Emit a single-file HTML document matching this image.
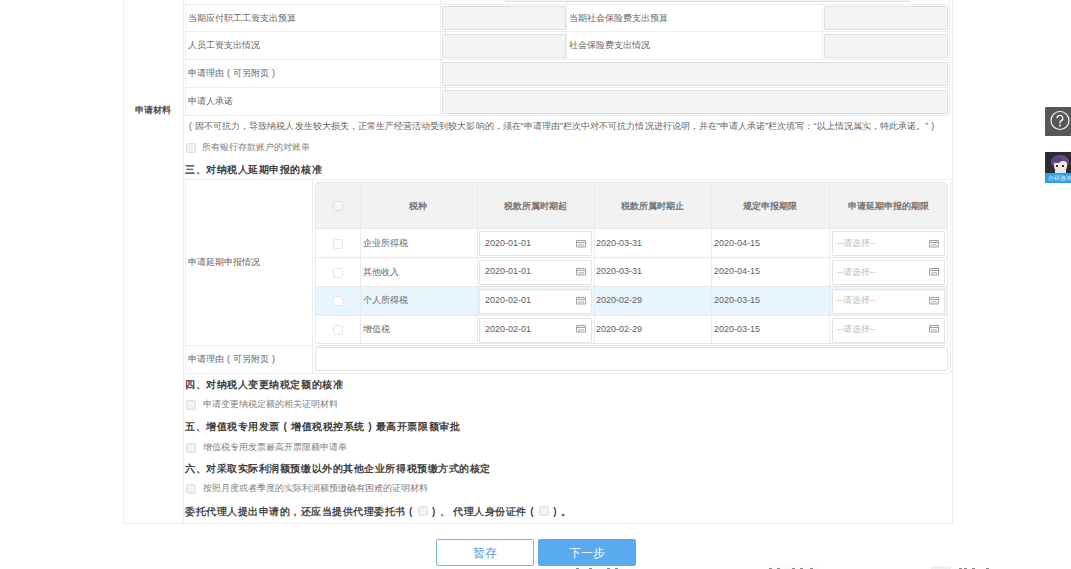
<!DOCTYPE html>
<html><head><meta charset="utf-8"><style>
html,body{margin:0;padding:0;background:#fff;width:1071px;height:569px;overflow:hidden;position:relative}
body{font-family:"Liberation Sans",sans-serif;font-size:9px;color:#666}
body div{position:absolute}
.t,.h,.d{white-space:nowrap;line-height:13px}
.h{font-size:10px;font-weight:bold;line-height:14px}
i{font-style:normal;display:inline-block;width:9px;text-align:center}
.h i{width:11px}
.cbi{display:inline-block;width:10px;height:10px;border:1px solid #e0e0e0;background:#f2f2f2;box-sizing:border-box;border-radius:2px;vertical-align:-1px;margin:0 1px}
</style></head><body>
<div style="left:123px;top:-10px;width:830px;height:534px;border:1px solid #eeeeee;box-sizing:border-box"></div>
<div style="left:183px;top:0px;width:1px;height:523px;background:#eeeeee"></div>
<div class="t" style="left:135px;top:104px;font-weight:bold;color:#4d4d4d">申请材料</div>
<div style="left:185px;top:0px;width:1px;height:116px;background:#eeeeee"></div>
<div style="left:949px;top:0px;width:1px;height:116px;background:#eeeeee"></div>
<div style="left:185px;top:4px;width:765px;height:1px;background:#eeeeee"></div>
<div style="left:185px;top:31px;width:765px;height:1px;background:#eeeeee"></div>
<div style="left:185px;top:59px;width:765px;height:1px;background:#eeeeee"></div>
<div style="left:185px;top:87px;width:765px;height:1px;background:#eeeeee"></div>
<div style="left:185px;top:115px;width:765px;height:1px;background:#eeeeee"></div>
<div style="left:440px;top:0px;width:1px;height:115px;background:#eeeeee"></div>
<div style="left:566px;top:0px;width:1px;height:59px;background:#eeeeee"></div>
<div style="left:822px;top:0px;width:1px;height:59px;background:#eeeeee"></div>
<div style="left:505px;top:-20px;width:405px;height:22px;border:1px solid #dfdfe0;background:#f3f4f6;box-sizing:border-box;border-radius:1px"></div>
<div style="left:442px;top:6px;width:124px;height:24px;border:1px solid #dfdfe0;background:#f3f4f6;box-sizing:border-box;border-radius:1px"></div>
<div style="left:824px;top:6px;width:124px;height:24px;border:1px solid #dfdfe0;background:#f3f4f6;box-sizing:border-box;border-radius:1px"></div>
<div style="left:442px;top:34px;width:124px;height:24px;border:1px solid #dfdfe0;background:#f3f4f6;box-sizing:border-box;border-radius:1px"></div>
<div style="left:824px;top:34px;width:124px;height:24px;border:1px solid #dfdfe0;background:#f3f4f6;box-sizing:border-box;border-radius:1px"></div>
<div style="left:442px;top:62px;width:506px;height:24px;border:1px solid #dfdfe0;background:#f3f4f6;box-sizing:border-box;border-radius:1px"></div>
<div style="left:442px;top:90px;width:506px;height:24px;border:1px solid #dfdfe0;background:#f3f4f6;box-sizing:border-box;border-radius:1px"></div>
<div class="t" style="left:188px;top:12px;">当期应付职工工资支出预算</div>
<div class="t" style="left:188px;top:39px;">人员工资支出情况</div>
<div class="t" style="left:188px;top:67px;">申请理由<i>(</i>可另附页<i>)</i></div>
<div class="t" style="left:188px;top:95px;">申请人承诺</div>
<div class="t" style="left:569px;top:12px;">当期社会保险费支出预算</div>
<div class="t" style="left:569px;top:39px;">社会保险费支出情况</div>
<div class="t" style="left:186px;top:120px;letter-spacing:0.05px"><i>(</i>因不可抗力，导致纳税人发生较大损失，正常生产经营活动受到较大影响的，须在“申请理由”栏次中对不可抗力情况进行说明，并在“申请人承诺”栏次填写：“以上情况属实，特此承诺。”<i>)</i></div>
<div style="left:186px;top:143px;width:10px;height:10px;border:1px solid #e0e0e0;background:#f2f2f2;box-sizing:border-box;border-radius:2px"></div>
<div class="t" style="left:202px;top:141px;color:#808080">所有银行存款账户的对账单</div>
<div class="h" style="left:185px;top:163px;letter-spacing:0.55px;color:#404040">三、对纳税人延期申报的核准</div>
<div style="left:185px;top:179px;width:766px;height:195px;border:1px solid #eeeeee;box-sizing:border-box"></div>
<div style="left:185px;top:345px;width:765px;height:1px;background:#eeeeee"></div>
<div style="left:312px;top:179px;width:1px;height:194px;background:#eeeeee"></div>
<div class="t" style="left:188px;top:256px;">申请延期申报情况</div>
<div class="t" style="left:188px;top:353px;">申请理由<i>(</i>可另附页<i>)</i></div>
<div style="left:315px;top:347px;width:633px;height:24px;border:1px solid #e4e4e4;background:#fff;box-sizing:border-box;border-radius:2px"></div>
<div style="left:315px;top:182px;width:633px;height:162px;border:1px solid #e9e9e9;box-sizing:border-box;border-radius:3px;overflow:hidden"></div>
<div style="left:316px;top:183px;width:631px;height:45px;background:#f2f2f2;border-radius:2px 2px 0 0"></div>
<div style="left:316px;top:286px;width:631px;height:29px;background:#e9f5fc"></div>
<div style="left:316px;top:228px;width:631px;height:1px;background:#e9e9e9"></div>
<div style="left:316px;top:257px;width:631px;height:1px;background:#e9e9e9"></div>
<div style="left:316px;top:286px;width:631px;height:1px;background:#e9e9e9"></div>
<div style="left:316px;top:315px;width:631px;height:1px;background:#e9e9e9"></div>
<div style="left:360px;top:183px;width:1px;height:160px;background:#ebebeb"></div>
<div style="left:477px;top:183px;width:1px;height:160px;background:#ebebeb"></div>
<div style="left:594px;top:183px;width:1px;height:160px;background:#ebebeb"></div>
<div style="left:711px;top:183px;width:1px;height:160px;background:#ebebeb"></div>
<div style="left:829px;top:183px;width:1px;height:160px;background:#ebebeb"></div>
<div class="t" style="left:318px;top:200px;width:200px;text-align:center;font-weight:bold;color:#737373">税种</div>
<div class="t" style="left:435px;top:200px;width:200px;text-align:center;font-weight:bold;color:#737373">税款所属时期起</div>
<div class="t" style="left:552px;top:200px;width:200px;text-align:center;font-weight:bold;color:#737373">税款所属时期止</div>
<div class="t" style="left:670px;top:200px;width:200px;text-align:center;font-weight:bold;color:#737373">规定申报期限</div>
<div class="t" style="left:788px;top:200px;width:200px;text-align:center;font-weight:bold;color:#737373">申请延期申报的期限</div>
<div style="left:333px;top:201px;width:10px;height:10px;border:1px solid #e0e0e0;background:#f7f7f7;box-sizing:border-box;border-radius:2px"></div>
<div style="left:333px;top:239px;width:10px;height:10px;border:1px solid #e6e6e6;background:#fff;box-sizing:border-box;border-radius:2px"></div>
<div class="t" style="left:363px;top:237px;">企业所得税</div>
<div style="left:479px;top:231px;width:113px;height:25px;border:1px solid #e4e4e4;background:#fff;box-sizing:border-box;border-radius:1px"></div>
<div class="d" style="left:485px;top:237px;color:#5e5e5e">2020-01-01</div>
<svg style="position:absolute;left:576px;top:239px" width="10" height="9" viewBox="0 0 10 9"><path d="M0.5 1.5h9v6.5h-9z M0.5 3.5h9" fill="none" stroke="#a4a4a4" stroke-width="1"/><path d="M2.5 0.8v1.5 M7.5 0.8v1.5" stroke="#a4a4a4" stroke-width="1"/><path d="M2.5 5.5h5v1.5h-5z" fill="none" stroke="#b8b8b8" stroke-width="0.8"/></svg>
<div class="d" style="left:596px;top:237px;color:#5e5e5e">2020-03-31</div>
<div class="d" style="left:714px;top:237px;color:#5e5e5e">2020-04-15</div>
<div style="left:832px;top:231px;width:113px;height:25px;border:1px solid #e4e4e4;background:#fff;box-sizing:border-box;border-radius:1px"></div>
<div class="t" style="left:837px;top:237px;color:#c0c0c0">--请选择--</div>
<svg style="position:absolute;left:929px;top:239px" width="10" height="9" viewBox="0 0 10 9"><path d="M0.5 1.5h9v6.5h-9z M0.5 3.5h9" fill="none" stroke="#a4a4a4" stroke-width="1"/><path d="M2.5 0.8v1.5 M7.5 0.8v1.5" stroke="#a4a4a4" stroke-width="1"/><path d="M2.5 5.5h5v1.5h-5z" fill="none" stroke="#b8b8b8" stroke-width="0.8"/></svg>
<div style="left:333px;top:268px;width:10px;height:10px;border:1px solid #e6e6e6;background:#fff;box-sizing:border-box;border-radius:2px"></div>
<div class="t" style="left:363px;top:266px;">其他收入</div>
<div style="left:479px;top:260px;width:113px;height:25px;border:1px solid #e4e4e4;background:#fff;box-sizing:border-box;border-radius:1px"></div>
<div class="d" style="left:485px;top:265px;color:#5e5e5e">2020-01-01</div>
<svg style="position:absolute;left:576px;top:267px" width="10" height="9" viewBox="0 0 10 9"><path d="M0.5 1.5h9v6.5h-9z M0.5 3.5h9" fill="none" stroke="#a4a4a4" stroke-width="1"/><path d="M2.5 0.8v1.5 M7.5 0.8v1.5" stroke="#a4a4a4" stroke-width="1"/><path d="M2.5 5.5h5v1.5h-5z" fill="none" stroke="#b8b8b8" stroke-width="0.8"/></svg>
<div class="d" style="left:596px;top:265px;color:#5e5e5e">2020-03-31</div>
<div class="d" style="left:714px;top:265px;color:#5e5e5e">2020-04-15</div>
<div style="left:832px;top:260px;width:113px;height:25px;border:1px solid #e4e4e4;background:#fff;box-sizing:border-box;border-radius:1px"></div>
<div class="t" style="left:837px;top:266px;color:#c0c0c0">--请选择--</div>
<svg style="position:absolute;left:929px;top:267px" width="10" height="9" viewBox="0 0 10 9"><path d="M0.5 1.5h9v6.5h-9z M0.5 3.5h9" fill="none" stroke="#a4a4a4" stroke-width="1"/><path d="M2.5 0.8v1.5 M7.5 0.8v1.5" stroke="#a4a4a4" stroke-width="1"/><path d="M2.5 5.5h5v1.5h-5z" fill="none" stroke="#b8b8b8" stroke-width="0.8"/></svg>
<div style="left:333px;top:296px;width:10px;height:10px;border:1px solid #e6e6e6;background:#fff;box-sizing:border-box;border-radius:2px"></div>
<div class="t" style="left:363px;top:294px;">个人所得税</div>
<div style="left:479px;top:289px;width:113px;height:25px;border:1px solid #e4e4e4;background:#fff;box-sizing:border-box;border-radius:1px"></div>
<div class="d" style="left:485px;top:294px;color:#5e5e5e">2020-02-01</div>
<svg style="position:absolute;left:576px;top:296px" width="10" height="9" viewBox="0 0 10 9"><path d="M0.5 1.5h9v6.5h-9z M0.5 3.5h9" fill="none" stroke="#a4a4a4" stroke-width="1"/><path d="M2.5 0.8v1.5 M7.5 0.8v1.5" stroke="#a4a4a4" stroke-width="1"/><path d="M2.5 5.5h5v1.5h-5z" fill="none" stroke="#b8b8b8" stroke-width="0.8"/></svg>
<div class="d" style="left:596px;top:294px;color:#5e5e5e">2020-02-29</div>
<div class="d" style="left:714px;top:294px;color:#5e5e5e">2020-03-15</div>
<div style="left:832px;top:289px;width:113px;height:25px;border:1px solid #e4e4e4;background:#fff;box-sizing:border-box;border-radius:1px"></div>
<div class="t" style="left:837px;top:294px;color:#c0c0c0">--请选择--</div>
<svg style="position:absolute;left:929px;top:296px" width="10" height="9" viewBox="0 0 10 9"><path d="M0.5 1.5h9v6.5h-9z M0.5 3.5h9" fill="none" stroke="#a4a4a4" stroke-width="1"/><path d="M2.5 0.8v1.5 M7.5 0.8v1.5" stroke="#a4a4a4" stroke-width="1"/><path d="M2.5 5.5h5v1.5h-5z" fill="none" stroke="#b8b8b8" stroke-width="0.8"/></svg>
<div style="left:333px;top:325px;width:10px;height:10px;border:1px solid #e6e6e6;background:#fff;box-sizing:border-box;border-radius:2px"></div>
<div class="t" style="left:363px;top:323px;">增值税</div>
<div style="left:479px;top:318px;width:113px;height:25px;border:1px solid #e4e4e4;background:#fff;box-sizing:border-box;border-radius:1px"></div>
<div class="d" style="left:485px;top:323px;color:#5e5e5e">2020-02-01</div>
<svg style="position:absolute;left:576px;top:324px" width="10" height="9" viewBox="0 0 10 9"><path d="M0.5 1.5h9v6.5h-9z M0.5 3.5h9" fill="none" stroke="#a4a4a4" stroke-width="1"/><path d="M2.5 0.8v1.5 M7.5 0.8v1.5" stroke="#a4a4a4" stroke-width="1"/><path d="M2.5 5.5h5v1.5h-5z" fill="none" stroke="#b8b8b8" stroke-width="0.8"/></svg>
<div class="d" style="left:596px;top:323px;color:#5e5e5e">2020-02-29</div>
<div class="d" style="left:714px;top:323px;color:#5e5e5e">2020-03-15</div>
<div style="left:832px;top:318px;width:113px;height:25px;border:1px solid #e4e4e4;background:#fff;box-sizing:border-box;border-radius:1px"></div>
<div class="t" style="left:837px;top:323px;color:#c0c0c0">--请选择--</div>
<svg style="position:absolute;left:929px;top:324px" width="10" height="9" viewBox="0 0 10 9"><path d="M0.5 1.5h9v6.5h-9z M0.5 3.5h9" fill="none" stroke="#a4a4a4" stroke-width="1"/><path d="M2.5 0.8v1.5 M7.5 0.8v1.5" stroke="#a4a4a4" stroke-width="1"/><path d="M2.5 5.5h5v1.5h-5z" fill="none" stroke="#b8b8b8" stroke-width="0.8"/></svg>
<div class="h" style="left:185px;top:378px;letter-spacing:0.55px;color:#404040">四、对纳税人变更纳税定额的核准</div>
<div style="left:186px;top:400px;width:10px;height:10px;border:1px solid #e0e0e0;background:#f2f2f2;box-sizing:border-box;border-radius:2px"></div>
<div class="t" style="left:203px;top:398px;color:#808080">申请变更纳税定额的相关证明材料</div>
<div class="h" style="left:185px;top:420px;letter-spacing:0.55px;color:#404040">五、增值税专用发票<i>(</i>增值税税控系统<i>)</i>最高开票限额审批</div>
<div style="left:186px;top:443px;width:10px;height:10px;border:1px solid #e0e0e0;background:#f2f2f2;box-sizing:border-box;border-radius:2px"></div>
<div class="t" style="left:203px;top:441px;color:#808080">增值税专用发票最高开票限额申请单</div>
<div class="h" style="left:185px;top:462px;letter-spacing:0.55px;color:#404040">六、对采取实际利润额预缴以外的其他企业所得税预缴方式的核定</div>
<div style="left:186px;top:484px;width:10px;height:10px;border:1px solid #e0e0e0;background:#f2f2f2;box-sizing:border-box;border-radius:2px"></div>
<div class="t" style="left:203px;top:482px;color:#808080">按照月度或者季度的实际利润额预缴确有困难的证明材料</div>
<div class="h" style="left:185px;top:505px;letter-spacing:0.5px;color:#484848">委托代理人提出申请的，还应当提供代理委托书<i>(</i><span class="cbi"></span><i>)</i>、 代理人身份证件<i>(</i><span class="cbi"></span><i>)</i>。</div>
<div style="left:436px;top:539px;width:98px;height:27px;border:1px solid #7ab6ec;box-sizing:border-box;border-radius:2px;background:#fff;color:#5a9ee0;font-size:12px;text-align:center;line-height:26px">暂存</div>
<div style="left:538px;top:539px;width:98px;height:27px;box-sizing:border-box;border-radius:2px;background:#5aaaf0;color:#fff;font-size:12px;text-align:center;line-height:28px">下一步</div>
<div style="left:1045px;top:107px;width:30px;height:29px;background:#575757;border-radius:1px"></div>
<svg style="position:absolute;left:1050px;top:110px" width="20" height="21" viewBox="0 0 20 21"><circle cx="10" cy="10.5" r="9" fill="none" stroke="#fff" stroke-width="1.2"/><path d="M7.2 8.2a2.8 2.8 0 1 1 4 2.5c-.8.4-1.2 1-1.2 1.8v.9" fill="none" stroke="#fff" stroke-width="1.3"/><circle cx="10" cy="15.5" r="0.9" fill="#fff"/></svg>
<div style="left:1045px;top:152px;width:30px;height:31px;background:#2c2c31;overflow:hidden"><div style="left:6px;top:3px;width:18px;height:12px;border-radius:50% 50% 35% 35%;background:#6a4a8c"></div><div style="left:9px;top:9px;width:13px;height:11px;border-radius:30% 30% 50% 50%;background:#f2e6de"></div><div style="left:7px;top:4px;width:10px;height:7px;border-radius:50%;background:#5e417e"></div><div style="left:11px;top:13px;width:2px;height:2px;background:#333"></div><div style="left:17px;top:13px;width:2px;height:2px;background:#333"></div><div style="left:10px;top:18px;width:11px;height:3px;background:#dfe8f0"></div><div style="left:0;top:21px;width:30px;height:10px;background:#2e9fe4"></div><div style="left:3px;top:21px;width:30px;height:10px;font-size:6px;line-height:10px;color:#e8f5fd;white-space:nowrap">办税咨询</div></div>
<div style="left:768px;top:565px;width:50px;height:4px;background:linear-gradient(#fff,#f9f9f9)"></div>
<div style="left:931px;top:566px;width:20px;height:3px;background:#f0f0f0"></div>
<div style="left:576px;top:568px;width:3px;height:1px;background:#8a8a8a"></div>
<div style="left:589px;top:568px;width:3px;height:1px;background:#8a8a8a"></div>
<div style="left:607px;top:568px;width:3px;height:1px;background:#8a8a8a"></div>
<div style="left:615px;top:568px;width:3px;height:1px;background:#8a8a8a"></div>
<div style="left:769px;top:568px;width:3px;height:1px;background:#8a8a8a"></div>
<div style="left:777px;top:568px;width:3px;height:1px;background:#8a8a8a"></div>
<div style="left:792px;top:568px;width:3px;height:1px;background:#8a8a8a"></div>
<div style="left:800px;top:568px;width:3px;height:1px;background:#8a8a8a"></div>
<div style="left:810px;top:568px;width:3px;height:1px;background:#8a8a8a"></div>
<div style="left:959px;top:568px;width:3px;height:1px;background:#8a8a8a"></div>
<div style="left:964px;top:568px;width:3px;height:1px;background:#8a8a8a"></div>
<div style="left:972px;top:568px;width:3px;height:1px;background:#8a8a8a"></div>
<div style="left:986px;top:568px;width:3px;height:1px;background:#8a8a8a"></div>
</body></html>
